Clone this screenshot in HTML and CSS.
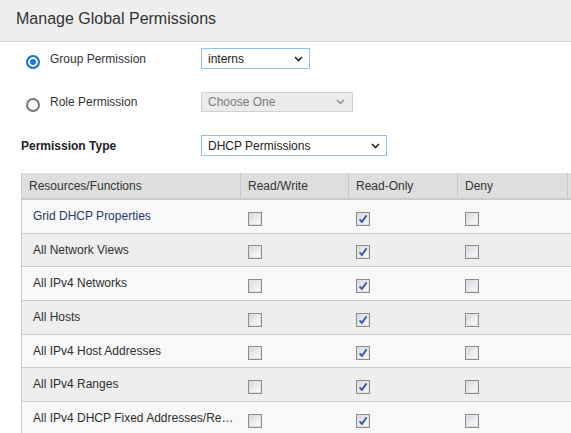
FILE: index.html
```html
<!DOCTYPE html>
<html>
<head>
<meta charset="utf-8">
<title>Manage Global Permissions</title>
<link rel="stylesheet" href="styles.css">
</head>
<body>
<div class="header"><h1 class="title">Manage Global Permissions</h1></div>
<div class="form">
  <div class="form-row row-group">
    <div class="label-col radio-col"><span class="radio radio-on"></span><span class="radio-text">Group Permission</span></div>
    <div class="select sel-interns"><span>interns</span><svg class="chev" width="9" height="6" viewBox="0 0 9 6"><path d="M1 1l3.5 3.5L8 1" fill="none" stroke="#222" stroke-width="1.6"/></svg></div>
  </div>
  <div class="form-row row-role">
    <div class="label-col radio-col"><span class="radio"></span><span class="radio-text">Role Permission</span></div>
    <div class="select sel-disabled"><span>Choose One</span><svg class="chev" width="9" height="6" viewBox="0 0 9 6"><path d="M1 1l3.5 3.5L8 1" fill="none" stroke="#8a8a8a" stroke-width="1.3"/></svg></div>
  </div>
  <div class="form-row row-type">
    <div class="label-col type-label">Permission Type</div>
    <div class="select sel-type"><span>DHCP Permissions</span><svg class="chev" width="9" height="6" viewBox="0 0 9 6"><path d="M1 1l3.5 3.5L8 1" fill="none" stroke="#222" stroke-width="1.6"/></svg></div>
  </div>
</div>
<div class="table">
  <div class="trow thead">
    <div class="cell c1">Resources/Functions</div>
    <div class="cell c2">Read/Write</div>
    <div class="cell c3">Read-Only</div>
    <div class="cell c4">Deny</div>
    <div class="cell c5"></div>
  </div>
  <div class="trow odd">
    <div class="cell c1 name name-link">Grid DHCP Properties</div>
    <div class="cell c2"><span class="cb"></span></div>
    <div class="cell c3"><span class="cb cb-on"><svg width="12" height="12" viewBox="0 0 12 12"><path d="M2.6 6.3l2.3 2.6L9.6 2.4" fill="none" stroke="#3d5ca6" stroke-width="1.9"/></svg></span></div>
    <div class="cell c4"><span class="cb"></span></div>
    <div class="cell c5"></div>
  </div>
  <div class="trow even">
    <div class="cell c1 name">All Network Views</div>
    <div class="cell c2"><span class="cb"></span></div>
    <div class="cell c3"><span class="cb cb-on"><svg width="12" height="12" viewBox="0 0 12 12"><path d="M2.6 6.3l2.3 2.6L9.6 2.4" fill="none" stroke="#3d5ca6" stroke-width="1.9"/></svg></span></div>
    <div class="cell c4"><span class="cb"></span></div>
    <div class="cell c5"></div>
  </div>
  <div class="trow odd">
    <div class="cell c1 name">All IPv4 Networks</div>
    <div class="cell c2"><span class="cb"></span></div>
    <div class="cell c3"><span class="cb cb-on"><svg width="12" height="12" viewBox="0 0 12 12"><path d="M2.6 6.3l2.3 2.6L9.6 2.4" fill="none" stroke="#3d5ca6" stroke-width="1.9"/></svg></span></div>
    <div class="cell c4"><span class="cb"></span></div>
    <div class="cell c5"></div>
  </div>
  <div class="trow even">
    <div class="cell c1 name">All Hosts</div>
    <div class="cell c2"><span class="cb"></span></div>
    <div class="cell c3"><span class="cb cb-on"><svg width="12" height="12" viewBox="0 0 12 12"><path d="M2.6 6.3l2.3 2.6L9.6 2.4" fill="none" stroke="#3d5ca6" stroke-width="1.9"/></svg></span></div>
    <div class="cell c4"><span class="cb"></span></div>
    <div class="cell c5"></div>
  </div>
  <div class="trow odd">
    <div class="cell c1 name">All IPv4 Host Addresses</div>
    <div class="cell c2"><span class="cb"></span></div>
    <div class="cell c3"><span class="cb cb-on"><svg width="12" height="12" viewBox="0 0 12 12"><path d="M2.6 6.3l2.3 2.6L9.6 2.4" fill="none" stroke="#3d5ca6" stroke-width="1.9"/></svg></span></div>
    <div class="cell c4"><span class="cb"></span></div>
    <div class="cell c5"></div>
  </div>
  <div class="trow even">
    <div class="cell c1 name">All IPv4 Ranges</div>
    <div class="cell c2"><span class="cb"></span></div>
    <div class="cell c3"><span class="cb cb-on"><svg width="12" height="12" viewBox="0 0 12 12"><path d="M2.6 6.3l2.3 2.6L9.6 2.4" fill="none" stroke="#3d5ca6" stroke-width="1.9"/></svg></span></div>
    <div class="cell c4"><span class="cb"></span></div>
    <div class="cell c5"></div>
  </div>
  <div class="trow odd">
    <div class="cell c1 name">All IPv4 DHCP Fixed Addresses/Reservations</div>
    <div class="cell c2"><span class="cb"></span></div>
    <div class="cell c3"><span class="cb cb-on"><svg width="12" height="12" viewBox="0 0 12 12"><path d="M2.6 6.3l2.3 2.6L9.6 2.4" fill="none" stroke="#3d5ca6" stroke-width="1.9"/></svg></span></div>
    <div class="cell c4"><span class="cb"></span></div>
    <div class="cell c5"></div>
  </div>
</div>
</body>
</html>
```
FILE: styles.css
```css
html, body {
  margin: 0;
  padding: 0;
}
body {
  width: 571px;
  height: 433px;
  overflow: hidden;
  background: #ffffff;
  font-family: "Liberation Sans", Arial, sans-serif;
  font-size: 12px;
  color: #333333;
}
.header {
  box-sizing: border-box;
  height: 42px;
  background: #eeeeee;
  border-bottom: 1px solid #d6d6d6;
  padding: 10px 0 0 16px;
}
.title {
  margin: 0;
  font-size: 16px;
  line-height: 18px;
  font-weight: normal;
  color: #333333;
}
.form {
  padding: 6px 0 0 21px;
}
.form-row {
  display: flex;
  align-items: center;
  margin-bottom: 23px;
}
.form-row.row-type {
  margin-bottom: 17px;
}
.label-col {
  width: 180px;
  display: flex;
  align-items: center;
}
.radio-col {
  padding-left: 5px;
  box-sizing: border-box;
}
.radio {
  box-sizing: border-box;
  width: 14px;
  height: 14px;
  border: 2px solid #767676;
  border-radius: 50%;
  margin-top: 6px;
  flex: none;
  background: #ffffff;
}
.radio-on {
  border-color: #1a73e8;
  background: #1a73e8;
  box-shadow: inset 0 0 0 2px #ffffff;
}
.radio-text {
  margin-left: 10px;
  color: #333333;
}
.type-label {
  font-weight: bold;
  color: #222222;
}
.select {
  box-sizing: border-box;
  height: 21px;
  border: 1px solid #8fc0ee;
  background: #ffffff;
  display: flex;
  align-items: center;
  justify-content: space-between;
  padding: 0 6px 0 6px;
  color: #222222;
}
.sel-interns { width: 109px; }
.sel-disabled {
  width: 152px;
  height: 20px;
  background: #ebebeb;
  border-color: #d2d2d2;
  color: #7a7a7a;
  padding-right: 7px;
}
.sel-type { width: 186px; }
.chev { display: block; }

.table {
  margin-left: 21px;
  width: 660px;
  border-left: 1px solid #cfcfcf;
}
.trow {
  display: grid;
  grid-template-columns: 219px 108px 109px 110px 114px;
  box-sizing: border-box;
  height: 33.65px;
  border-bottom: 1px solid #cccccc;
}
.thead {
  height: 27px;
  background: #dedede;
  border-bottom: 2px solid #cbcbcb;
}
.odd { background: #f8f8f8; }
.even { background: #eeeeee; }
.cell {
  display: flex;
  align-items: center;
  padding-left: 7px;
  box-sizing: border-box;
  min-width: 0;
}
.thead .cell {
  border-right: 1px solid #c8c8c8;
  color: #333333;
}
.thead .c5 { border-right: none; }
.name {
  padding-left: 11px;
  padding-right: 6px;
  color: #2e2e2e;
  white-space: nowrap;
  overflow: hidden;
  text-overflow: ellipsis;
  display: block;
  line-height: 32px;
}
.thead .c1 { padding-left: 7px; }
.name-link { color: #22386a; }
.cb {
  box-sizing: border-box;
  width: 14px;
  height: 14px;
  margin-top: 5px;
  border: 1px solid #8c8c8c;
  background: linear-gradient(135deg, #cdd2dc 0%, #e9eaee 45%, #fafafa 100%);
  box-shadow: inset 0 0 0 1px #e2e2e2;
  display: flex;
  align-items: center;
  justify-content: center;
}
.cb svg { display: block; }
```
